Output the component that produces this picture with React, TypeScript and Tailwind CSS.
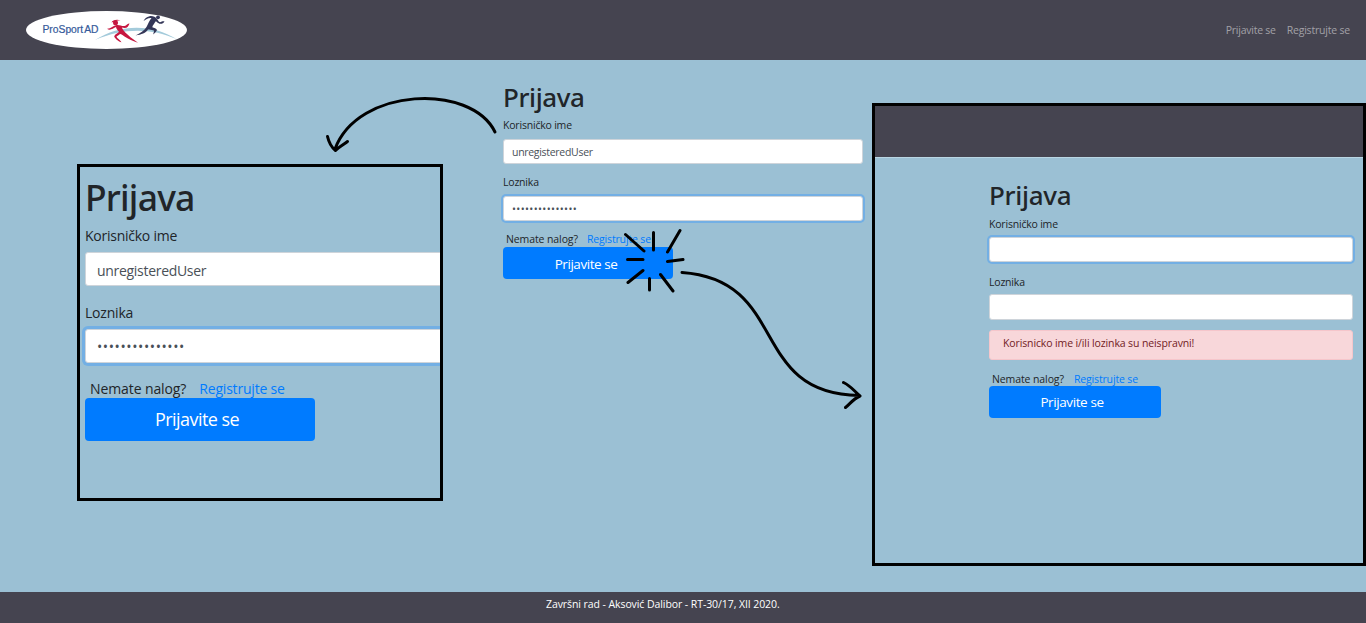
const ui = "font-['Open_Sans','Noto_Sans',sans-serif]";

function Logo() {
  return (
    <svg width="162" height="40" viewBox="25 10 162 40" className="block">
      <ellipse cx="106.5" cy="30" rx="80.5" ry="19" fill="#fff" />
      <path d="M95 40C120 23.500 153 24 176.500 39C151 28 124 27.500 95 40Z" fill="#a4cbdb" />
      <text x="42.500" y="32.500" fontSize="10" textLength="56" lengthAdjust="spacingAndGlyphs" fill="#34599a" stroke="#34599a" strokeWidth=".2" fontFamily="Liberation Sans, sans-serif">ProSport<tspan dx="1">AD</tspan></text>
      <g fill="#c6163f">
        <circle cx="115.500" cy="22.700" r="2.500" />
        <path d="M111.500 22.500C112.500 19.800 117 19 120.500 20.300C117 20.600 115 21.300 111.500 22.500Z" />
        <path d="M107 28.700C110.500 29 113.500 25.500 116.500 25C120 24.600 121.500 26.300 124.500 26C126.500 25.500 127.500 23.500 129.500 23.500C128.500 26 127.500 28 124.500 28C123.500 28 122.500 27.500 121.800 27.500C123 31 127 34 130.500 37.200C133 39 135.500 41 138 42.800C133.500 41.500 128 39 124.500 36.500C122.500 35 121.500 34 120 33.900C118.500 35.700 116.500 35.500 116.500 36.800C117 38.500 120.500 40 121.500 42.300C118.500 41.700 115.300 38.800 114.200 36.500C114.700 34 118.300 33.500 118.900 31.500C117.300 30 116.300 28.500 116 27C113 28.500 110 31 107 28.700Z" />
      </g>
      <g fill="#343758">
        <circle cx="158" cy="17.300" r="1.900" />
        <path d="M143.500 21C144.500 19 146.500 16.800 149.500 16.200C152.500 15.700 155.500 16.800 156.500 18.500C158.500 20 158 22 160 22.300C161.500 21.500 162.500 21 164.500 21.200C163.500 23.300 161.500 24.300 159.500 23.700C157.500 23.200 157 21.700 155.800 21.300C154.500 23.500 152.500 25.500 152.300 27.300C154 28.100 156.500 28.500 157 30C156.300 31.700 154.500 33.500 153.300 34.500C153.300 33 154.500 31.600 153.800 30.600C151 29.800 149.500 29.500 148 29.500C146 33 141.500 34.500 135.500 35.500C140 33.500 144.500 30.500 146.500 27C148 24 149.500 20.500 151.500 18C148 17.600 146 19.500 143.500 21Z" />
      </g>
    </svg>
  );
}

const dots = "•••••••••••••••";
const heading = "font-['Noto_Sans','Open_Sans',sans-serif] font-medium";
const field = "flex shrink-0 items-center rounded-[3px] border border-[#ced4da] bg-white text-[#495057] whitespace-nowrap";
const focus = "border-[#80bdff] shadow-[0_0_0_2px_#73afe4]";

function CenterForm() {
  return (
    <section className="flex w-[360px] flex-col pt-[20px] text-[10.5px] text-[#212529]">
      <h1 className={`${heading} h-[37px] text-[26px] leading-[34px] tracking-[-0.4px]`}>Prijava</h1>
      <label className="h-[22px] leading-[16px] tracking-[-0.2px]">Korisničko ime</label>
      <div className={`${field} h-[25px] px-2 pt-0.5 tracking-[-0.3px]`}>unregisteredUser</div>
      <label className="mt-[10px] h-[22px] leading-[16px] tracking-[-0.2px]">Loznika</label>
      <div className={`${field} ${focus} h-[25px] px-2 pt-0.5 tracking-[0.39px]`}>{dots}</div>
      <div className="mt-[10px] flex h-[16px] gap-[9px] pl-[3px] leading-[16px]">
        <span className="tracking-[-0.1px]">Nemate nalog?</span>
        <a className="text-[#007bff] tracking-[-0.15px]">Registrujte se</a>
      </div>
      <button className="h-[32px] w-[170px] rounded-[4px] bg-[#007bff] pt-0.5 pr-1 text-[13.5px] text-white tracking-[-0.45px]">Prijavite se</button>
    </section>
  );
}

function EnlargedForm() {
  return (
    <section className="mt-[104px] ml-[77px] flex h-[337px] w-[366px] flex-col overflow-hidden border-[3px] border-black pt-[6px] pl-[5px] text-[14px] text-[#212529]">
      <h1 className={`${heading} h-[52px] text-[35.5px] leading-[48px] tracking-[-0.8px]`}>Prijava</h1>
      <label className="h-[27px] leading-[21px] tracking-[-0.25px]">Korisničko ime</label>
      <div className={`${field} -mr-2 h-[34px] px-[11px] pt-0.5 tracking-[-0.3px]`}>unregisteredUser</div>
      <label className="mt-[16px] h-[27px] leading-[21px] tracking-[-0.2px]">Loznika</label>
      <div className={`${field} h-[34px] -mr-2 border-[#80bdff] px-[11px] tracking-[0.6px] shadow-[0_0_0_3px_#73afe4]`}>{dots}</div>
      <div className="mt-[15px] flex h-[20px] gap-[13px] pl-[5px] leading-[21px]">
        <span className="tracking-[-0.1px]">Nemate nalog?</span>
        <a className="text-[#007bff] tracking-[-0.2px]">Registrujte se</a>
      </div>
      <button className="h-[43px] w-[230px] rounded-[4px] bg-[#007bff] pr-1.5 text-[18px] text-white tracking-[-0.55px]">Prijavite se</button>
    </section>
  );
}

function FailedForm() {
  return (
    <section className="mt-[43px] ml-[9px] flex h-[463px] w-[494px] flex-col border-[3px] border-black text-[10.5px] text-[#212529]">
      <div className="h-[52px] shrink-0 border-b border-[#b9d6e3] bg-[#454450]" />
      <div className="ml-[114px] flex w-[364px] flex-col pt-[20px]">
        <h1 className={`${heading} h-[38px] text-[26px] leading-[34px] tracking-[-0.3px]`}>Prijava</h1>
        <label className="h-[21px] leading-[16px] tracking-[-0.2px]">Korisničko ime</label>
        <div className={`${field} ${focus} h-[25px] px-2`} />
        <label className="mt-[12px] h-[20px] leading-[16px] tracking-[-0.2px]">Loznika</label>
        <div className={`${field} h-[26px] px-2`} />
        <div className="mt-[10px] h-[30px] rounded-[3px] border border-[#f5c6cb] bg-[#f8d7da] pl-[13px] leading-[24px] text-[#721c24] tracking-[-0.12px]">Korisnicko ime i/ili lozinka su neispravni!</div>
        <div className="mt-[10px] flex h-[16px] gap-[10px] pl-[3px] leading-[18px]">
          <span className="tracking-[-0.1px]">Nemate nalog?</span>
          <a className="text-[#007bff] tracking-[-0.15px]">Registrujte se</a>
        </div>
        <button className="h-[32px] w-[172px] rounded-[4px] bg-[#007bff] pt-px pr-1.5 text-[13.5px] text-white tracking-[-0.4px]">Prijavite se</button>
      </div>
    </section>
  );
}

function Annotations() {
  return (
    <svg width="1366" height="623" className="pointer-events-none absolute inset-0" fill="none" stroke="#000" strokeWidth="3" strokeLinecap="round" strokeLinejoin="round">
      <path d="M495 132C471 83 358 87 335 149M327.500 136.500C329 143 331 147 335.500 150.500C340 146 343 145 347.500 141.500" />
      <path d="M682 272.500C790 280 748 394 859 395.500M843.500 382.500C851 386 854 391 860 396C853 399 850 404 845.500 407.500" />
      <path d="M625.500 234.500L644 251M653.500 232.500V250M680 230.500L667.500 252M627.500 259.500H643M667.500 261.500L683 259.500M643 270.500L628 282.500M649.500 278.500V290M660.500 274.500L673 291" />
    </svg>
  );
}

export default function App() {
  return (
    <div className={`relative flex h-[623px] w-[1366px] flex-col overflow-hidden bg-[#9bc0d4] ${ui}`}>
      <header className="flex h-[60px] shrink-0 items-center justify-between bg-[#454450] pr-4 pl-[25px]">
        <Logo />
        <nav className="flex gap-[11px] pt-0.5 text-[10.5px] text-[#a2a1a7]">
          <a className="tracking-[-0.25px]">Prijavite se</a>
          <a className="tracking-[-0.2px]">Registrujte se</a>
        </nav>
      </header>
      <main className="flex h-[532px] items-start">
        <EnlargedForm />
        <div className="ml-[60px]"><CenterForm /></div>
        <FailedForm />
      </main>
      <footer className="h-[31px] bg-[#454450] pl-[546px] text-[10.5px] leading-[24px] whitespace-nowrap text-white tracking-[-0.08px]">Završni rad - Aksović Dalibor - RT-30/17, XII 2020.</footer>
      <Annotations />
    </div>
  );
}
